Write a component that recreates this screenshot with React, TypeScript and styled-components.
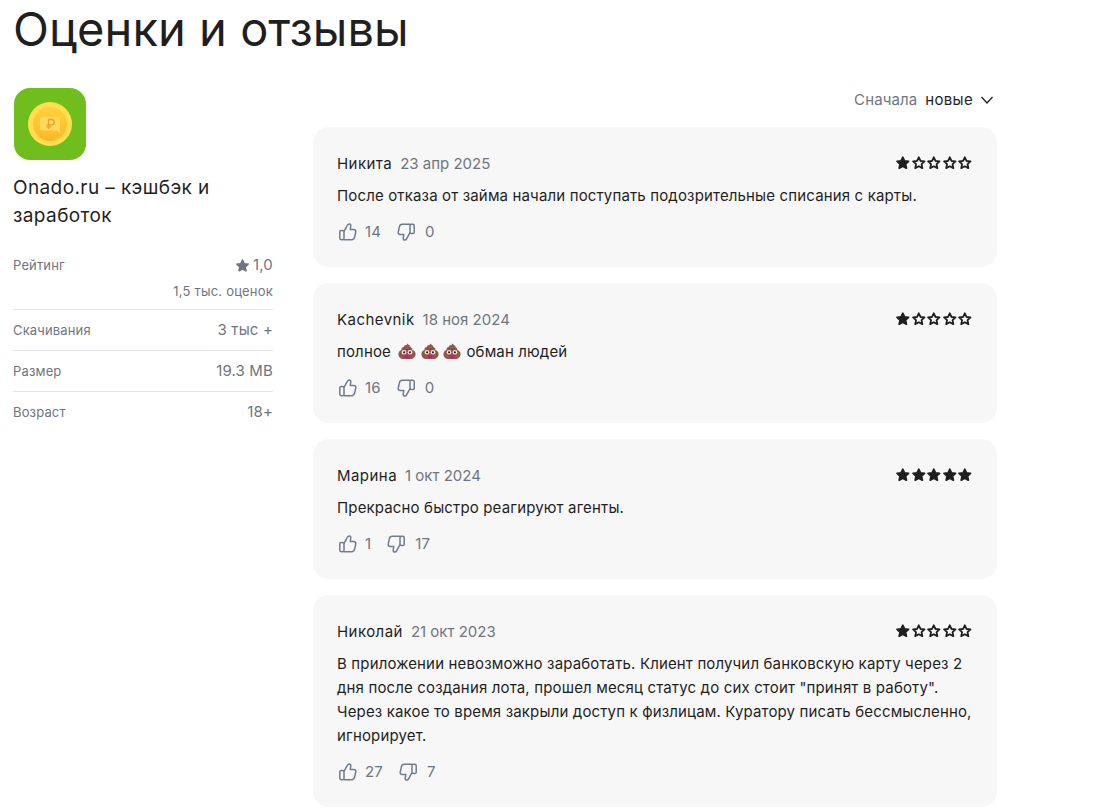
import React from "react";
import styled, { createGlobalStyle } from "styled-components";

const GlobalStyle = createGlobalStyle`
  html, body {
    margin: 0;
    padding: 0;
    background: #fff;
    font-family: Inter, "Noto Sans", sans-serif;
    color: #1f1f1f;
    overflow: hidden;
  }
`;

const Page = styled.div`
  width: 1099px;
  height: 810px;
  padding: 0 0 0 13px;
  box-sizing: border-box;
  overflow: hidden;
`;

const Title = styled.h1`
  margin: 0;
  height: 88px;
  font: 400 47px/58px Inter, sans-serif;
  letter-spacing: 0.05px;
  color: #1f1f1f;
`;

const Columns = styled.div`
  display: flex;
  gap: 40px;
  align-items: flex-start;
`;

const Sidebar = styled.aside`
  width: 260px;
  flex: none;
`;

const IconSvg = styled.svg`
  display: block;
`;

const AppName = styled.div`
  margin-top: 14px;
  font: 400 19px/28px Inter, sans-serif;
  letter-spacing: 0.4px;
  color: #1f1f1f;
`;

const InfoList = styled.div`
  margin-top: 16px;
`;

const InfoRow = styled.div<{ $last?: boolean; $tall?: boolean }>`
  display: flex;
  flex-wrap: wrap;
  justify-content: space-between;
  align-items: center;
  height: ${(p) => (p.$tall ? "64px" : "41px")};
  box-sizing: border-box;
  align-content: flex-start;
  padding-top: ${(p) => (p.$tall ? "10px" : "11px")};
  border-bottom: ${(p) => (p.$last ? "none" : "1px solid #e2e4e9")};
`;

const InfoLabel = styled.span`
  font: 400 13px/18px Inter, sans-serif;
  letter-spacing: 0.15px;
  color: #6f7580;
`;

const InfoValue = styled.span`
  display: inline-flex;
  align-items: center;
  gap: 3px;
  font: 400 15px/18px Inter, sans-serif;
  letter-spacing: 0.15px;
  color: #6f7580;
`;

const InfoNote = styled.span`
  width: 100%;
  margin-top: 8px;
  text-align: right;
  font: 400 13px/18px Inter, sans-serif;
  letter-spacing: 0.2px;
  color: #6f7580;
`;

const Reviews = styled.main`
  width: 684px;
  flex: none;
`;

const SortBar = styled.div`
  display: flex;
  justify-content: flex-end;
  align-items: center;
  height: 24px;
  margin-bottom: 15px;
  padding-right: 3px;
  font: 400 15px/24px Inter, sans-serif;
  letter-spacing: 0.13px;
`;

const SortLabel = styled.span`
  color: #6f7580;
  margin-right: 8px;
`;

const SortValue = styled.span`
  color: #1f1f1f;
  margin-right: 7px;
  letter-spacing: 0.3px;
`;

const CardList = styled.div`
  display: flex;
  flex-direction: column;
  gap: 16px;
`;

const Card = styled.article`
  background: #f7f7f7;
  border-radius: 16px;
  padding: 25px 24px 23px;
`;

const CardHead = styled.div`
  display: flex;
  align-items: center;
  height: 24px;
  font: 400 15px/24px Inter, sans-serif;
`;

const Author = styled.span`
  color: #1f1f1f;
  margin-right: 8px;
  letter-spacing: 0.45px;
`;

const DateText = styled.span`
  color: #6f7580;
`;

const Stars = styled.div`
  display: flex;
  margin-left: auto;
  margin-top: -3px;
`;

const Body = styled.p`
  margin: 8px 0 0;
  font: 400 15px/24px Inter, sans-serif;
  letter-spacing: 0.15px;
  color: #1f1f1f;
`;

const EmojiRun = styled.span`
  margin: 0 1px 0 3px;
`;

const PoopSvg = styled.svg`
  vertical-align: -3px;
`;

const Votes = styled.div`
  display: flex;
  align-items: center;
  height: 24px;
  margin-top: 12px;
  font: 400 15px/24px Inter, sans-serif;
  letter-spacing: 0.13px;
  color: #6f7580;
`;

const Vote = styled.span<{ $down?: boolean }>`
  display: inline-flex;
  align-items: center;
  gap: ${(p) => (p.$down ? "10px" : "8px")};
  margin-left: ${(p) => (p.$down ? "16px" : "2px")};
`;

function Star({ filled, size = 15.6, color = "#1f1f1f" }: { filled: boolean; size?: number; color?: string }) {
  return (
    <svg width={size} height={size} viewBox="0 0 24 24">
      <path
        d="M12 3.500l2.600 5.700 6.200.7-4.600 4.200 1.300 6.100L12 17.200l-5.500 3 1.300-6.100-4.600-4.200 6.200-.7z"
        fill={filled ? color : "none"}
        stroke={color}
        strokeWidth="2.800"
        strokeLinejoin="round"
      />
    </svg>
  );
}

function ThumbUp() {
  return (
    <svg width="18" height="18" viewBox="0 0 18 18" fill="none" stroke="#707c8c" strokeWidth="1.500" strokeLinejoin="round" strokeLinecap="round">
      <rect x="0.800" y="7.400" width="4.200" height="9.300" rx="1.400" />
      <path d="M5 8.300 8.300 2.400c.4-.9 1.200-1.500 2-1.500 1 0 1.700.9 1.500 2l-.6 3.600h3.700c1.300 0 2.200 1.200 1.900 2.400l-1.200 5.300c-.3 1.500-1.400 2.500-2.800 2.500H5" />
    </svg>
  );
}

function ThumbDown() {
  return (
    <svg width="18" height="18" viewBox="0 0 18 18" fill="none" stroke="#707c8c" strokeWidth="1.500" strokeLinejoin="round" strokeLinecap="round">
      <rect x="13" y="1.300" width="4.200" height="9.300" rx="1.400" />
      <path d="M13 9.700 9.700 15.600c-.4.900-1.200 1.500-2 1.500-1 0-1.700-.9-1.500-2l.6-3.600H3.100c-1.300 0-2.200-1.200-1.900-2.400l1.200-5.300C2.700 2.300 3.800 1.300 5.200 1.300H13" />
    </svg>
  );
}

function Poop() {
  return (
    <PoopSvg width="18" height="17" viewBox="0 0 18 17">
      <path d="M9.500.6c.8 1.500 3.200 1.700 3.100 3.700 1.300.3 2 1.500 1.700 2.600 1.900.5 3.300 2 3.300 4 0 3-2.500 5.100-5 5.100H5.400C2.700 16 .4 14.100.4 11c0-2 1.200-3.600 3.100-4.100-.3-1.500.9-2.800 2.300-2.800C5.400 2.200 9 2.700 9.500.6z" fill="#95584c" />
      <path d="M5 5.800c2 .8 5.500.8 7.800-.2M3.600 9.600c-.6.400-1 .9-1.200 1.500" fill="none" stroke="#74403a" strokeWidth=".7" />
      <circle cx="6" cy="9.200" r="2.300" fill="#f4ece8" />
      <circle cx="12" cy="9.200" r="2.300" fill="#f4ece8" />
      <circle cx="6.100" cy="9.300" r="1.100" fill="#2e1c1a" />
      <circle cx="11.900" cy="9.300" r="1.100" fill="#2e1c1a" />
      <path d="M5.800 12.300h6.400c-.2 2.100-1.500 3.100-3.200 3.100s-3-1-3.200-3.100z" fill="#c21a8d" />
    </PoopSvg>
  );
}

function AppIcon() {
  return (
    <IconSvg width="73" height="72" viewBox="0 0 73 72">
      <defs>
        <linearGradient id="coin" x1="0" y1="0" x2="0" y2="1">
          <stop offset="0" stopColor="#ffd23e" />
          <stop offset="1" stopColor="#ffb727" />
        </linearGradient>
      </defs>
      <rect x="1" y="0" width="72" height="72" rx="16" fill="#6fbe1e" />
      <circle cx="37" cy="36" r="22" fill="#ffdf4f" />
      <circle cx="37" cy="36" r="17" fill="url(#coin)" />
      <path d="M29 29h16a2 2 0 0 1 2 2v14l-4-2.500H29a2 2 0 0 1-2-2V31a2 2 0 0 1 2-2z" fill="#ffd95c" />
      <path d="M35.500 41V31.500h3a2.700 2.700 0 0 1 0 5.400h-5m0 1.900h5" fill="none" stroke="#e9a22e" strokeWidth="1.300" />
    </IconSvg>
  );
}

type Review = {
  author: string;
  date: string;
  rating: number;
  text: React.ReactNode;
  up: number;
  down: number;
};

const reviews: Review[] = [
  { author: "Никита", date: "23 апр 2025", rating: 1, text: "После отказа от займа начали поступать подозрительные списания с карты.", up: 14, down: 0 },
  {
    author: "Kachevnik",
    date: "18 ноя 2024",
    rating: 1,
    text: (
      <>
        полное{" "}
        <EmojiRun>
          <Poop /> <Poop /> <Poop />
        </EmojiRun>{" "}
        обман людей
      </>
    ),
    up: 16,
    down: 0,
  },
  { author: "Марина", date: "1 окт 2024", rating: 5, text: "Прекрасно быстро реагируют агенты.", up: 1, down: 17 },
  {
    author: "Николай",
    date: "21 окт 2023",
    rating: 1,
    text: 'В приложении невозможно заработать. Клиент получил банковскую карту через 2 дня после создания лота, прошел месяц статус до сих стоит "принят в работу". Через какое то время закрыли доступ к физлицам. Куратору писать бессмысленно, игнорирует.',
    up: 27,
    down: 7,
  },
];

export default function App() {
  return (
    <Page>
      <GlobalStyle />
      <Title>Оценки и отзывы</Title>
      <Columns>
        <Sidebar>
          <AppIcon />
          <AppName>Onado.ru – кэшбэк и заработок</AppName>
          <InfoList>
            <InfoRow $tall>
              <InfoLabel>Рейтинг</InfoLabel>
              <InfoValue>
                <Star filled size={15} color="#6f7580" />
                1,0
              </InfoValue>
              <InfoNote>1,5 тыс. оценок</InfoNote>
            </InfoRow>
            <InfoRow>
              <InfoLabel>Скачивания</InfoLabel>
              <InfoValue>3 тыс +</InfoValue>
            </InfoRow>
            <InfoRow>
              <InfoLabel>Размер</InfoLabel>
              <InfoValue>19.3 MB</InfoValue>
            </InfoRow>
            <InfoRow $last>
              <InfoLabel>Возраст</InfoLabel>
              <InfoValue>18+</InfoValue>
            </InfoRow>
          </InfoList>
        </Sidebar>
        <Reviews>
          <SortBar>
            <SortLabel>Сначала</SortLabel>
            <SortValue>новые</SortValue>
            <svg width="14" height="14" viewBox="0 0 14 14" fill="none" stroke="#1f1f1f" strokeWidth="1.300">
              <path d="M1.500 4 7 10l5.500-6" />
            </svg>
          </SortBar>
          <CardList>
            {reviews.map((r) => (
              <Card key={r.author}>
                <CardHead>
                  <Author>{r.author}</Author>
                  <DateText>{r.date}</DateText>
                  <Stars>
                    {[1, 2, 3, 4, 5].map((n) => (
                      <Star key={n} filled={n <= r.rating} />
                    ))}
                  </Stars>
                </CardHead>
                <Body>{r.text}</Body>
                <Votes>
                  <Vote>
                    <ThumbUp />
                    {r.up}
                  </Vote>
                  <Vote $down>
                    <ThumbDown />
                    {r.down}
                  </Vote>
                </Votes>
              </Card>
            ))}
          </CardList>
        </Reviews>
      </Columns>
    </Page>
  );
}
